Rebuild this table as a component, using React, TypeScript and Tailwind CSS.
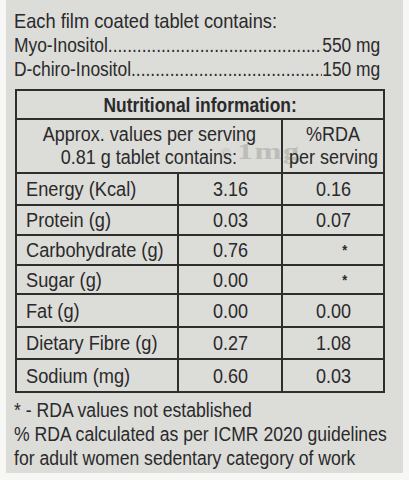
import React from 'react';

const rows = [
  { name: 'Energy (Kcal)', value: '3.16', rda: '0.16', h: 'h-[32px]' },
  { name: 'Protein (g)', value: '0.03', rda: '0.07', h: 'h-[30px]' },
  { name: 'Carbohydrate (g)', value: '0.76', rda: '*', h: 'h-[30px]' },
  { name: 'Sugar (g)', value: '0.00', rda: '*', h: 'h-[29px]' },
  { name: 'Fat (g)', value: '0.00', rda: '0.00', h: 'h-[33px]' },
  { name: 'Dietary Fibre (g)', value: '0.27', rda: '1.08', h: 'h-[32px]' },
  { name: 'Sodium (mg)', value: '0.60', rda: '0.03', h: 'h-[33px]' },
];

// condensed look: Liberation Sans squeezed horizontally
function Nx({ children, left }: { children: React.ReactNode; left?: boolean }) {
  return (
    <span className={left ? 'inline-block whitespace-nowrap scale-x-[0.91] origin-left' : 'inline-block whitespace-nowrap scale-x-[0.9]'}>
      {children}
    </span>
  );
}

function DotLine({ label, amount }: { label: string; amount: string }) {
  return (
    <div className="w-[421px] origin-left scale-x-[0.87] flex items-baseline h-[24px] leading-[24px] overflow-hidden whitespace-nowrap">
      <span>{label}</span>
      <span className="flex-1 overflow-hidden">
        ..........................................................................................
      </span>
      <span>{amount}</span>
    </div>
  );
}

const cell = 'border-2 border-[#2e2e2e]';

export default function App() {
  return (
    <div className="w-[409px] h-[480px] bg-[#f7f7f6] overflow-hidden">
      <div
        className="ml-[6px] w-[397px] h-[473px] bg-[#dcdcd9] pl-[8px] pt-[8px] text-[#2a2a2a] text-[20px] overflow-hidden"
        style={{ fontFamily: '"Liberation Sans", Arial, sans-serif' }}
      >
        <div className="h-[25px] leading-[25px] text-[21px] origin-left scale-x-[0.87] whitespace-nowrap">
          Each film coated tablet contains:
        </div>
        <DotLine label="Myo-Inositol" amount="550 mg" />
        <DotLine label="D-chiro-Inositol" amount="150 mg" />

        <div className="relative mt-[8px] ml-[1px]">
          {/* faint watermark behind the header row */}
          <div
            className="absolute left-[205px] top-[50px] flex items-baseline gap-[6px] text-[#bcbcb8] font-bold leading-none whitespace-nowrap"
            style={{ fontFamily: '"Liberation Serif", serif' }}
          >
            <span className="text-[15px] font-normal">©</span>
            <span className="inline-block text-[24px] tracking-[1px] origin-left scale-x-[1.35]">1mg</span>
          </div>
          <table className="relative border-collapse border-2 border-[#2e2e2e] table-fixed w-[368px]">
            <colgroup>
              <col className="w-[162px]" />
              <col className="w-[104px]" />
              <col className="w-[102px]" />
            </colgroup>
            <tbody>
              <tr className="h-[29px]">
                <td colSpan={3} className={`${cell} text-center font-bold leading-none`}>
                  <span className="inline-block whitespace-nowrap scale-x-[0.87]">Nutritional information:</span>
                </td>
              </tr>
              <tr className="h-[54px]">
                <td colSpan={2} className={`${cell} text-center leading-[23px]`}>
                  <Nx>Approx. values per serving</Nx>
                  <br />
                  <Nx>0.81 g tablet contains:</Nx>
                </td>
                <td className={`${cell} text-center leading-[23px]`}>
                  <Nx>%RDA</Nx>
                  <br />
                  <Nx>per serving</Nx>
                </td>
              </tr>
              {rows.map((r) => (
                <tr key={r.name} className={r.h}>
                  <td className={`${cell} pl-[9px] leading-none`}>
                    <Nx left>{r.name}</Nx>
                  </td>
                  <td className={`${cell} text-center leading-none`}>
                    <Nx>{r.value}</Nx>
                  </td>
                  <td
                    className={
                      r.rda === '*'
                        ? `${cell} text-right pr-[36px] text-[14px] font-bold leading-none`
                        : `${cell} text-center leading-none`
                    }
                  >
                    <Nx>{r.rda}</Nx>
                  </td>
                </tr>
              ))}
            </tbody>
          </table>
        </div>

        <div className="mt-[5px] leading-[24px] whitespace-nowrap origin-left scale-x-[0.88] w-[430px]">
          <div>* - RDA values not established</div>
          <div>% RDA calculated as per ICMR 2020 guidelines</div>
          <div>for adult women sedentary category of work</div>
        </div>
      </div>
    </div>
  );
}
